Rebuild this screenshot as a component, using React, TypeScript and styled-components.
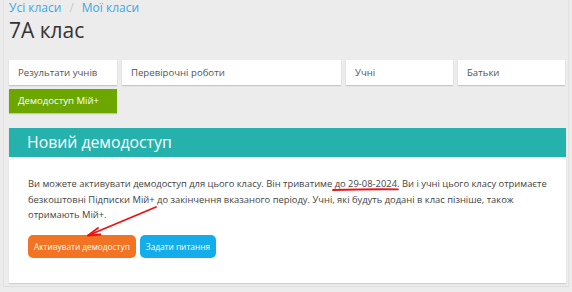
import React from 'react';
import styled, { createGlobalStyle } from 'styled-components';

const GlobalStyle = createGlobalStyle`
  html, body {
    margin: 0;
    padding: 0;
    background: #ececec;
    font-family: "Open Sans", "Liberation Sans", sans-serif;
  }
`;

const Page = styled.div`
  position: relative;
  width: 572px;
  height: 292px;
  overflow: hidden;
  box-sizing: border-box;
`;

const Frame = styled.div`
  margin: 0 3px;
  padding: 0 5px;
  height: 287px;
  box-sizing: border-box;
  border-left: 1px solid #e2e2e2;
  border-right: 1px solid #e2e2e2;
  border-bottom: 1px solid #dedede;
`;

const Breadcrumb = styled.div`
  display: flex;
  gap: 8px;
  font-size: 12px;
  line-height: 15px;
  color: #c8c8c8;
`;

const Crumb = styled.a`
  color: #3aa8e4;
  text-decoration: none;
`;

const Title = styled.h1`
  margin: 1px 0 0;
  font-size: 21px;
  font-weight: 400;
  line-height: 28px;
  color: #333;
`;

const Tabs = styled.div`
  display: grid;
  grid-template-columns: 108px 219px 107px 107px;
  gap: 5px;
  margin-top: 16px;
`;

const Tab = styled.div`
  height: 25px;
  background: #fff;
  box-shadow: 0 1px 1px rgba(0, 0, 0, 0.16);
  font-size: 9.6px;
  line-height: 25px;
  color: #555;
  padding-left: 9px;
`;

const DemoTab = styled.div`
  width: 108px;
  height: 24px;
  margin-top: 4px;
  background: #6ca700;
  box-shadow: 0 1px 1px rgba(0, 0, 0, 0.18);
  font-size: 9.6px;
  line-height: 24px;
  color: #fff;
  padding-left: 9px;
  box-sizing: border-box;
`;

const Panel = styled.section`
  margin-top: 15px;
  width: 557px;
  background: #fff;
  box-shadow: 0 1px 1px rgba(0, 0, 0, 0.12);
`;

const PanelHead = styled.div`
  height: 29px;
  background: #25b2ad;
  color: #fff;
  font-size: 15.8px;
  line-height: 29px;
  padding-left: 18px;
`;

const PanelBody = styled.div`
  padding: 19px 10px 25px 19px;
`;

const Text = styled.p`
  margin: 0;
  font-size: 9.4px;
  line-height: 15.5px;
  color: #444;
`;

const Actions = styled.div`
  display: flex;
  gap: 4px;
  margin-top: 12px;
`;

const Button = styled.button<{ $tone: string }>`
  height: 23px;
  padding: 0 6px;
  border: 0;
  border-radius: 5px;
  background: ${p => p.$tone};
  color: #fff;
  font-family: inherit;
  font-size: 8.3px;
`;

const Marks = styled.svg`
  position: absolute;
  left: 0;
  top: 0;
  pointer-events: none;
`;

export default function App() {
  return (
    <>
      <GlobalStyle />
      <Page>
        <Frame>
          <Breadcrumb>
            <Crumb>Усі класи</Crumb>
            <span>/</span>
            <Crumb>Мої класи</Crumb>
          </Breadcrumb>
          <Title>7А клас</Title>
          <Tabs>
            <Tab>Результати учнів</Tab>
            <Tab>Перевірочні роботи</Tab>
            <Tab>Учні</Tab>
            <Tab>Батьки</Tab>
          </Tabs>
          <DemoTab>Демодоступ Мій+</DemoTab>
          <Panel>
            <PanelHead>Новий демодоступ</PanelHead>
            <PanelBody>
              <Text>
                Ви можете активувати демодоступ для цього класу. Він триватиме до 29-08-2024. Ви і учні цього класу отримаєте
                безкоштовні Підписки Мій+ до закінчення вказаного періоду. Учні, які будуть додані в клас пізніше, також
                отримають Мій+.
              </Text>
              <Actions>
                <Button $tone="#f27321">Активувати демодоступ</Button>
                <Button $tone="#12adea">Задати питання</Button>
              </Actions>
            </PanelBody>
          </Panel>
        </Frame>
        <Marks width="572" height="292" viewBox="0 0 572 292">
          <path d="M333 190 Q365 189 398 189.3" stroke="#e8141c" strokeWidth="1.8" fill="none" strokeLinecap="round" />
          <path d="M156 207 L88 235.5" stroke="#f01010" strokeWidth="1.8" fill="none" strokeLinecap="round" />
          <path d="M88 235.5 L98 228 M88 235.5 L100.5 234.5" stroke="#f01010" strokeWidth="1.8" fill="none" strokeLinecap="round" />
        </Marks>
      </Page>
    </>
  );
}
